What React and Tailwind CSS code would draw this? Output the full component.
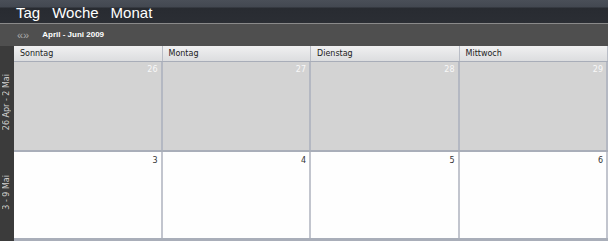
export default function App() {
  const days = ["Sonntag", "Montag", "Dienstag", "Mittwoch"];
  const week1 = ["26", "27", "28", "29"];
  const week2 = ["3", "4", "5", "6"];
  return (
    <div className="w-[608px] h-[241px] overflow-hidden bg-[#3b3b3b] font-['Liberation_Sans',Arial,sans-serif]">
      <div className="h-[23px] flex items-center pl-[16px] pt-[2px] gap-[12px] bg-[linear-gradient(#4a4f58_0px,#434851_7px,#282b31_8px,#2b2e34_100%)] text-white text-[15px] leading-none">
        <span>Tag</span>
        <span>Woche</span>
        <span>Monat</span>
      </div>
      <div className="h-px bg-[#8a8a8a]" />
      <div className="h-[22px] flex items-center bg-[#4f4f4f] pl-[17px] text-[8px]">
        <span className="text-[#a9a9a9] text-[11px] leading-none">«»</span>
        <span className="ml-[13px] font-bold text-white">April - Juni 2009</span>
      </div>
      <div className="flex h-[195px]">
        <div className="w-[14px] flex flex-col bg-[#3b3b3b]">
          <div className="h-[16px]" />
          <div className="h-[90px] flex items-center justify-center pb-[10px]">
            <span className="[writing-mode:vertical-rl] rotate-180 text-[8px] text-[#cfcfcf] whitespace-nowrap leading-none font-['DejaVu_Sans',sans-serif]">26 Apr - 2 Mai</span>
          </div>
          <div className="h-[89px] flex items-center justify-center pb-[8px]">
            <span className="[writing-mode:vertical-rl] rotate-180 text-[8px] text-[#cfcfcf] whitespace-nowrap leading-none font-['DejaVu_Sans',sans-serif]">3 - 9 Mai</span>
          </div>
        </div>
        <div className="flex-1 flex flex-col">
          <div className="grid grid-cols-4 h-[16px] bg-[linear-gradient(#f0f0f1,#dcdddf)] border-b border-[#a8adb8]">
            {days.map((d) => (
              <div key={d} className="border-r border-[#b9bdc6] pl-[6px] text-[8px] text-[#222] flex items-center font-['DejaVu_Sans',sans-serif]">
                {d}
              </div>
            ))}
          </div>
          <div className="grid grid-cols-4 h-[90px] bg-[#d3d3d3] border-b-2 border-[#a9aeb9]">
            {week1.map((n) => (
              <div key={n} className="border-r-2 border-[#b4b8c2] flex justify-end pr-[3px] pt-[4px] text-[8px] text-[#f8f8f8] leading-none font-['DejaVu_Sans',sans-serif]">
                {n}
              </div>
            ))}
          </div>
          <div className="grid grid-cols-4 h-[89px] bg-[#fefefe] border-b-[3px] border-[#a9aeb9]">
            {week2.map((n) => (
              <div key={n} className="border-r-2 border-[#c2c5ce] flex justify-end pr-[3px] pt-[5px] text-[8px] text-[#333] leading-none font-['DejaVu_Sans',sans-serif]">
                {n}
              </div>
            ))}
          </div>
        </div>
      </div>
    </div>
  );
}
